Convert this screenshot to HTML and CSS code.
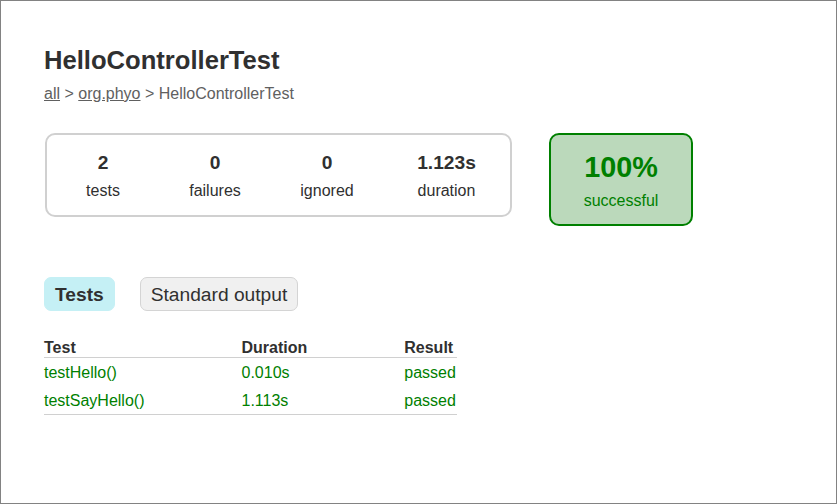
FILE: index.html
```html
<!DOCTYPE html>
<html>
<head>
<meta charset="utf-8">
<title>Test results - HelloControllerTest</title>
<link rel="stylesheet" href="styles.css">
</head>
<body>
<div class="frame">
  <div class="content">
    <h1 class="title">HelloControllerTest</h1>
    <div class="breadcrumbs"><a href="#">all</a> &gt; <a href="#">org.phyo</a> &gt; HelloControllerTest</div>
    <div class="summary">
      <table class="summary-table">
        <tr>
          <td>
            <div class="summary-group">
              <table class="counters">
                <tr>
                  <td><div class="info-box"><div class="counter">2</div><p>tests</p></div></td>
                  <td><div class="info-box"><div class="counter">0</div><p>failures</p></div></td>
                  <td><div class="info-box"><div class="counter">0</div><p>ignored</p></div></td>
                  <td><div class="info-box info-duration"><div class="counter">1.123s</div><p>duration</p></div></td>
                </tr>
              </table>
            </div>
          </td>
          <td>
            <div class="info-box success-rate">
              <div class="percent">100%</div>
              <p>successful</p>
            </div>
          </td>
        </tr>
      </table>
    </div>
    <div class="tabs">
      <ul class="tab-links">
        <li class="tab-link selected"><a href="#">Tests</a></li>
        <li class="tab-link"><a href="#">Standard output</a></li>
      </ul>
      <div class="tab">
        <table class="results">
          <thead>
            <tr><th>Test</th><th>Duration</th><th>Result</th></tr>
          </thead>
          <tbody>
            <tr class="success"><td>testHello()</td><td>0.010s</td><td>passed</td></tr>
            <tr class="success"><td>testSayHello()</td><td>1.113s</td><td>passed</td></tr>
          </tbody>
        </table>
      </div>
    </div>
  </div>
</div>
</body>
</html>
```

FILE: styles.css
```css
html, body {
  margin: 0;
  padding: 0;
}

body {
  font-family: "Liberation Sans", Arial, sans-serif;
  font-size: 16px;
  color: #303030;
  background: #ffffff;
}

a, a:visited {
  color: #303030;
}

.frame {
  box-sizing: border-box;
  width: 837px;
  height: 504px;
  border: 1px solid #828282;
  overflow: hidden;
}

.content {
  padding: 27px 43px;
}

.title {
  font-size: 25.6px;
  font-weight: bold;
  margin: 18px 0 9px 0;
  white-space: nowrap;
}

.breadcrumbs {
  padding-top: 1px;
}

.breadcrumbs,
.breadcrumbs a {
  color: #606060;
}

.summary {
  margin-top: 29px;
  margin-bottom: 40px;
}

.summary-table,
.counters {
  border-collapse: collapse;
}

.summary-table td,
.counters td {
  vertical-align: top;
  padding: 1px;
}

.summary-group {
  border: 2px solid #d0d0d0;
  border-radius: 10px;
}

.info-box {
  width: 110px;
  padding-top: 16px;
  padding-bottom: 14px;
  text-align: center;
}

.info-box p {
  margin: 0;
}

.info-duration {
  width: 125px;
}

.counter,
.percent {
  font-size: 19.2px;
  font-weight: bold;
  margin-bottom: 8px;
}

.success-rate {
  width: 140px;
  margin-left: 35px;
  border: 2px solid #008000;
  border-radius: 10px;
  background-color: #bbd9bb;
  color: #008000;
}

.success-rate .percent {
  font-size: 28.8px;
}

.tab-links {
  display: flex;
  gap: 25px;
  list-style: none;
  margin: 16px 0;
  padding: 10px 0;
}

.tab-link {
  padding: 6px 10px 4px 10px;
  border: 1px solid #d4d4d4;
  border-radius: 7px;
  background-color: #f0f0f0;
}

.tab-link a {
  font-size: 19.2px;
  display: block;
  text-decoration: none;
  color: #303030;
}

.tab-link.selected {
  background-color: #c5f0f5;
  border-color: #c5f0f5;
}

.tab-link.selected a {
  font-weight: bold;
}

.results {
  min-width: 350px;
  border-collapse: collapse;
  border-bottom: 1px solid #d0d0d0;
}

.results th {
  text-align: left;
  white-space: nowrap;
  padding: 2px 1px 0 96px;
  border-bottom: 1px solid #d0d0d0;
}

.results td {
  white-space: nowrap;
  padding: 6px 1px 4px 96px;
}

.results th:first-child,
.results td:first-child {
  padding-left: 0;
}

.results tr.success td {
  color: #008000;
}
```
